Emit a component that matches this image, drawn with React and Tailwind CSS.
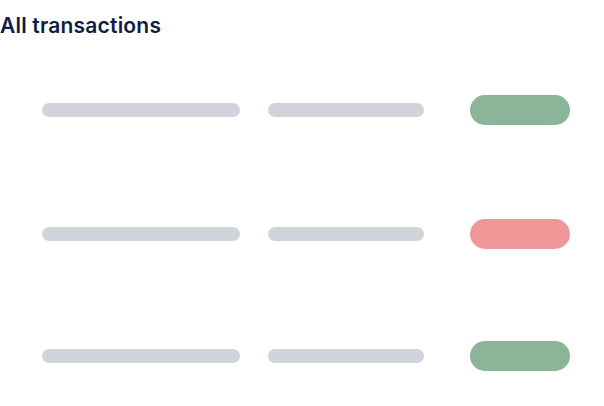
import React from 'react';

const rows = [
  { status: 'bg-[#8bb499]', mt: 'mt-[55px]' },
  { status: 'bg-[#f09797]', mt: 'mt-[94px]' },
  { status: 'bg-[#8bb499]', mt: 'mt-[92px]' },
];

const TransactionRow = ({ status, mt }) => (
  <div className={`flex items-center h-[30px] pl-[42px] ${mt}`}>
    <div className="w-[198px] h-[14px] rounded-full bg-[#d1d5db]" />
    <div className="w-[156px] h-[14px] rounded-full bg-[#d1d5db] ml-[28px]" />
    <div className={`w-[100px] h-[30px] rounded-full ml-[46px] ${status}`} />
  </div>
);

export default function App() {
  return (
    <div className="w-[604px] h-[406px] bg-white overflow-hidden">
      {/* Header */}
      <h1 className="mt-[12px] text-[21px] leading-[28px] font-semibold text-[#101c45] tracking-[0.2px] font-['Inter',sans-serif]">
        All transactions
      </h1>

      {/* Skeleton rows */}
      {rows.map((row, i) => (
        <TransactionRow key={i} status={row.status} mt={row.mt} />
      ))}
    </div>
  );
}
